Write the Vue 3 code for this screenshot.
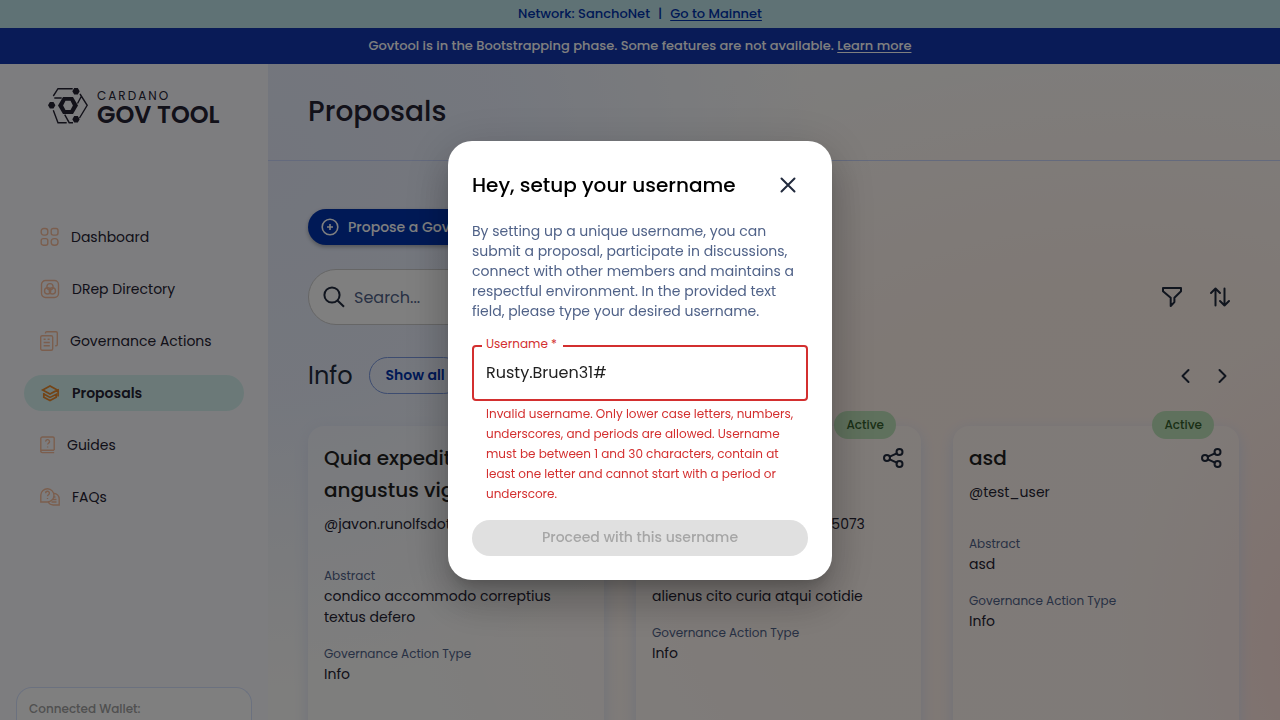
<script setup>
import { ref } from 'vue'

const username = ref('Rusty.Bruen31#')

const nav = [
  { label: 'Dashboard', icon: 'dashboard', width: 19 },
  { label: 'DRep Directory', icon: 'drep', width: 20 },
  { label: 'Governance Actions', icon: 'actions', width: 18 },
  { label: 'Proposals', icon: 'proposals', width: 20, active: true },
  { label: 'Guides', icon: 'guides', width: 15 },
  { label: 'FAQs', icon: 'faqs', width: 20 },
]

const cards = [
  { title: 'Quia expedita angustus vigor', user: '@javon.runolfsdottir', abstract: 'condico accommodo correptius textus defero', type: 'Info' },
  { title: 'Alienus cito curia atqui', user: '@cotidie_curia.atqui.citol5073', abstract: 'alienus cito curia atqui cotidie', type: 'Info' },
  { title: 'asd', user: '@test_user', abstract: 'asd', type: 'Info' },
]
</script>

<template>
  <div class="page">
    <div class="network">
      <span>Network: SanchoNet</span><span>|</span><a href="#">Go to Mainnet</a>
    </div>
    <div class="phase">Govtool is in the Bootstrapping phase. Some features are not available. <a href="#">Learn more</a></div>

    <div class="body">
      <aside class="sidebar">
        <div class="logo">
          <svg width="40" height="36" viewBox="0 0 40 36" fill="none" stroke="currentColor">
            <path d="M5.3 8 10 .7h14.7M5.3 22.3 10 34.8h8.7M32 6l7.2 11.3L31.5 30M6.3 10h7.4M33.5 8l-4 7.5M16.7 26.7l4.5 8H25" stroke-width="1.4" />
            <path fill="currentColor" stroke="none" fill-rule="evenodd" d="M15 9h10l5 8.4-5 8.6H15l-5-8.6zM17.5 12.8l-2.4 4.6 2.4 4.6h5l2.4-4.6-2.4-4.6z" />
            <path fill="currentColor" stroke="none" d="M26.2 0h3.6l1.9 3.3-1.9 3.3h-3.6l-1.9-3.3zM1.9 14h3.6l1.9 3.3-1.9 3.3H1.9L0 17.3zM26.2 28h3.6l1.9 3.3-1.9 3.3h-3.6l-1.9-3.3z" />
          </svg>
          <div class="logo-text"><span>CARDANO</span><strong>GOV TOOL</strong></div>
        </div>

        <nav>
          <a v-for="n in nav" :key="n.label" href="#" :class="{ active: n.active }">
            <svg v-if="n.icon === 'dashboard'" :width="n.width" height="20" viewBox="0 0 19 20">
              <rect x="1.2" y="1.5" width="6.6" height="6.6" rx="2.6" /><rect x="11.2" y="1.5" width="6.8" height="6.6" rx="2" />
              <rect x="1.2" y="11.6" width="6.6" height="6.6" rx="2" /><rect x="11.2" y="11.6" width="6.8" height="6.6" rx="3" />
            </svg>
            <svg v-else-if="n.icon === 'drep'" :width="n.width" height="20" viewBox="0 0 20 20">
              <rect x="1.5" y="1.5" width="17" height="17" rx="4" /><circle cx="10" cy="7.7" r="3.1" /><circle cx="7.6" cy="11.9" r="3.1" /><circle cx="12.4" cy="11.9" r="3.1" />
            </svg>
            <svg v-else-if="n.icon === 'actions'" :width="n.width" height="20" viewBox="0 0 18 20">
              <rect x=".7" y="4.7" width="12" height="14.6" rx="1.5" /><path d="M5.5 2.6V2A1.3 1.3 0 0 1 6.8.7H16A1.3 1.3 0 0 1 17.3 2v11.5a1.3 1.3 0 0 1-1.3 1.3h-.8M3.6 8.2h2M7.6 8.2h2M3.6 11.5h6.2M3.6 14.8h6.2" />
            </svg>
            <svg v-else-if="n.icon === 'proposals'" :width="n.width" height="20" viewBox="0 0 20 20" class="strong">
              <path d="M2.7 7 10 3l7.3 4-7.3 4zM11.500 10.200 18.100 7v6.500M3.800 10v4.300L10 17.600l6.200-3.300V11.300L10 14.400 3.800 10.900" />
            </svg>
            <svg v-else-if="n.icon === 'guides'" :width="n.width" height="20" viewBox="0 0 15 20">
              <path d="M14.2 15V3.3A1.3 1.3 0 0 0 12.9 2H2.4A1.6 1.6 0 0 0 .8 3.6v12.2a1.5 1.5 0 0 0 1.5 1.8h11.9M.8 15.2h13.4M5.7 6.6a1.9 1.9 0 1 1 2.8 1.6c-.7.5-.9.8-.9 1.4M7.6 11.5v.9" />
            </svg>
            <svg v-else :width="n.width" height="20" viewBox="0 0 20 20">
              <path d="M.8 15V8a6.6 6.6 0 1 1 6.6 7zM13.8 6.2A6 6 0 0 1 19.2 12v6h-6a6 6 0 0 1-5-3M5.6 6.2a1.9 1.9 0 1 1 2.8 1.6c-.7.5-.9.8-.9 1.4M7.5 11v.9M13.5 10h2M12.5 12.5h4M11.5 15h5" />
            </svg>
            <span>{{ n.label }}</span>
          </a>
        </nav>

        <div class="wallet">Connected Wallet:</div>
      </aside>

      <main>
        <header><h1>Proposals</h1></header>
        <div class="content">
          <button class="propose">
            <svg width="20" height="20" viewBox="0 0 20 20" fill="none" stroke="currentColor" stroke-width="1.6"><circle cx="10" cy="10" r="7.8" /><path d="M10 7v6M7 10h6" /></svg>
            Propose a Governance Action
          </button>

          <div class="tools">
            <label class="search">
              <svg width="24" height="24" viewBox="0 0 24 24" fill="none" stroke="currentColor" stroke-width="2"><circle cx="10" cy="10" r="7.6" /><path d="m15.5 15.5 6.5 6.3" /></svg>
              <input type="text" placeholder="Search..." aria-label="Search" />
            </label>
            <div class="tool-icons">
              <button class="icon" aria-label="Filter">
                <svg width="24" height="24" viewBox="0 0 24 24"><path d="M3 3h18v3.2l-6.6 6.5v4.4L10.7 21v-8.3L3 6.2z" /></svg>
              </button>
              <button class="icon" aria-label="Sort">
                <svg width="24" height="24" viewBox="0 0 24 24"><path d="M7.5 20.500V3.5M3 8l4.500-4.500L12 8M16.500 3.500v17M12 16l4.500 4.500L21 16" /></svg>
              </button>
            </div>
          </div>

          <div class="section-head">
            <h2>Info</h2>
            <button class="show">Show all</button>
            <div class="arrows">
              <button class="icon" aria-label="Previous"><svg width="24" height="24" viewBox="0 0 24 24"><path d="m14.500 6-6 6 6 6" /></svg></button>
              <button class="icon" aria-label="Next"><svg width="24" height="24" viewBox="0 0 24 24"><path d="m9.500 6 6 6-6 6" /></svg></button>
            </div>
          </div>

          <div class="cards">
            <article v-for="c in cards" :key="c.title">
              <span class="chip">Active</span>
              <div class="card-head">
                <h3>{{ c.title }}</h3>
                <button class="icon" aria-label="Share">
                  <svg width="24" height="24" viewBox="0 0 24 24"><circle cx="6" cy="12" r="3" /><circle cx="18.500" cy="6" r="3" /><circle cx="18.500" cy="18" r="3" /><path d="m8.800 10.700 7-3.400M8.800 13.300l7 3.400" /></svg>
                </button>
              </div>
              <p class="user">{{ c.user }}</p>
              <dl>
                <div><dt>Abstract</dt><dd>{{ c.abstract }}</dd></div>
                <div><dt>Governance Action Type</dt><dd>{{ c.type }}</dd></div>
              </dl>
            </article>
          </div>
        </div>
      </main>
    </div>

    <div class="backdrop">
      <form class="dialog" role="dialog" aria-labelledby="dialog-title" @submit.prevent>
        <div class="dialog-head">
          <h2 id="dialog-title">Hey, setup your username</h2>
          <button type="button" class="close" aria-label="Close">
            <svg width="24" height="24" viewBox="0 0 24 24"><path d="m5.5 5.5 13 13M18.5 5.5l-13 13" /></svg>
          </button>
        </div>
        <p class="desc">By setting up a unique username, you can submit a proposal, participate in discussions, connect with other members and maintains a respectful environment. In the provided text field, please type your desired username.</p>
        <div class="field">
          <label for="username">Username *</label>
          <input id="username" v-model="username" type="text" aria-describedby="username-help" />
        </div>
        <p id="username-help" class="help">Invalid username. Only lower case letters, numbers, underscores, and periods are allowed. Username must be between 1 and 30 characters, contain at least one letter and cannot start with a period or underscore.</p>
        <button class="submit" disabled>Proceed with this username</button>
      </form>
    </div>
  </div>
</template>

<style>
body { margin: 0; }
</style>

<style scoped>
* { box-sizing: border-box; }
.page {
  height: 100vh;
  overflow: hidden;
  display: flex;
  flex-direction: column;
  font-family: Poppins, Inter, "Open Sans", sans-serif;
  font-size: 14px;
  color: #212a3d;
}
h1, h2, h3, p, dl, dd { margin: 0; font-weight: 400; }
button, input { font: inherit; color: inherit; border: 0; background: none; padding: 0; }
.network {
  flex: 0 0 28px;
  display: flex;
  align-items: center;
  justify-content: center;
  gap: 8px;
  font-size: 13px;
  font-weight: 500;
  color: #0033ad;
  background: #bfe4ea;
}
.network a, .phase a { color: inherit; text-underline-offset: 2px; text-decoration-thickness: 1px; }
.phase {
  flex: 0 0 36px;
  line-height: 36px;
  text-align: center;
  font-size: 13px;
  font-weight: 500;
  color: #fff;
  background: #1236ae;
}
.body { flex: 1; min-height: 0; display: flex; }
.sidebar {
  flex: 0 0 268px;
  display: flex;
  flex-direction: column;
  background: #fbfbff;
}
.logo { display: flex; gap: 9px; padding: 24px 0 0 48px; color: #242232; }
.logo-text { display: flex; flex-direction: column; }
.logo-text span { font-size: 12px; line-height: 15px; letter-spacing: 2px; }
.logo-text strong { font-size: 24px; line-height: 24px; font-weight: 600; white-space: nowrap; }
nav { display: flex; flex-direction: column; gap: 16px; padding: 92px 24px 0; }
nav a {
  display: flex;
  align-items: center;
  gap: 12px;
  height: 36px;
  padding: 0 16px;
  border-radius: 18px;
  color: #242232;
  text-decoration: none;
}
nav svg { fill: none; stroke: #f6bd9c; stroke-width: 1.4; }
nav svg.strong { stroke: #e8882c; stroke-width: 1.7; }
nav a.active { background: #d6f3f1; font-weight: 600; }
.wallet {
  flex: 1 0 90px;
  margin: 172px 16px 0;
  padding: 12px;
  border: 1px solid #d6e2ff;
  border-bottom: 0;
  border-radius: 16px 16px 0 0;
  background: #fff;
  color: #a0a0a0;
  font-size: 12px;
  font-weight: 500;
  line-height: 18px;
}
main {
  flex: 1;
  min-width: 0;
  background:
    radial-gradient(ellipse 55% 80% at 0% 15%, #e6ebfa 0%, rgba(232, 238, 252, .9) 45%, rgba(240, 244, 253, 0) 100%),
    radial-gradient(ellipse 20% 50% at 104% 90%, #ffe0da 0%, rgba(255, 226, 220, 0) 100%),
    radial-gradient(ellipse 75% 85% at 85% 75%, #fff1ea 0%, #fff2eb 50%, rgba(255, 244, 238, 0) 100%),
    #fdfcfa;
}
header { height: 97px; padding: 0 40px; border-bottom: 1px solid #c8d4fb; }
h1 { font-size: 28px; line-height: 96px; font-weight: 500; color: #242232; }
.content { padding: 48px 40px 0; }
.propose {
  display: flex;
  align-items: center;
  gap: 8px;
  height: 36px;
  padding: 0 24px 0 12px;
  border-radius: 18px;
  background: #0033ad;
  color: #fff;
  font-weight: 500;
  white-space: nowrap;
  box-shadow: 0 2px 4px rgba(0, 0, 0, .3);
}
.tools { display: flex; justify-content: space-between; align-items: center; margin-top: 24px; }
.search {
  display: flex;
  align-items: center;
  gap: 8px;
  flex: 0 1 500px;
  height: 56px;
  padding: 0 13px;
  border: 1px solid #ccc;
  border-radius: 28px;
  background: #fff;
}
.search input { flex: 1; min-width: 0; outline: 0; font-size: 16px; }
.search input::placeholder { color: #506288; opacity: 1; }
.icon { display: flex; color: #212a3d; }
.icon svg { fill: none; stroke: currentColor; stroke-width: 2; stroke-linejoin: round; stroke-linecap: round; }
.tool-icons { display: flex; gap: 24px; padding-right: 8px; }
.section-head { display: flex; align-items: center; height: 37px; margin-top: 32px; }
h2 { font-size: 24px; }
.show { height: 37px; margin-left: 16px; padding: 0 16px; border: 1px solid #7a98e0; border-radius: 19px; color: #0033ad; font-weight: 600; white-space: nowrap; }
.arrows { margin-left: auto; display: flex; gap: 12px; padding-right: 6px; }
.cards { display: grid; grid-template-columns: 297fr 286fr 287fr; gap: 32px; margin-top: 32px; padding-right: 1px; }
article {
  position: relative;
  min-height: 340px;
  padding: 16px;
  border-radius: 16px;
  background: rgba(255, 255, 255, .3);
  box-shadow: 0 4px 15px #dde3f5;
}
.chip {
  position: absolute;
  top: -15px;
  right: 25px;
  padding: 0 12px;
  border-radius: 14px;
  background: #bfe3ba;
  color: #355f2d;
  font-size: 12px;
  font-weight: 500;
  line-height: 28px;
}
.card-head { display: flex; justify-content: space-between; align-items: flex-start; }
h3 { max-width: 200px; font-size: 20px; line-height: 32px; font-weight: 500; color: #212121; }
.card-head .icon { padding: 4px 0; }
.user { margin-top: 8px; line-height: 20px; color: #242232; }
dl { display: flex; flex-direction: column; gap: 16px; margin-top: 32px; }
dt { font-size: 12px; line-height: 20px; color: #506288; }
dd { line-height: 21px; color: #242232; }
.backdrop {
  position: fixed;
  inset: 0;
  display: flex;
  align-items: center;
  justify-content: center;
  background: rgba(0, 0, 0, .5);
}
.dialog {
  width: 384px;
  padding: 24px;
  border-radius: 24px;
  background: #fff;
  box-shadow: 0 11px 15px -7px rgba(0, 0, 0, .2), 0 24px 38px 3px rgba(0, 0, 0, .14), 0 9px 46px 8px rgba(0, 0, 0, .12);
}
.dialog-head { display: flex; align-items: center; justify-content: space-between; height: 40px; }
.dialog h2 { font-size: 20px; font-weight: 500; color: #000; white-space: nowrap; }
.close { display: flex; padding: 8px; }
.close svg { fill: none; stroke: #212a3d; stroke-width: 2; stroke-linecap: round; }
.desc { margin-top: 16px; line-height: 20px; color: #506288; }
.field { position: relative; margin-top: 24px; }
.field label {
  position: absolute;
  top: -10px;
  left: 10px;
  padding: 0 6px 0 4px;
  background: #fff;
  color: #d32f2f;
  font-size: 12px;
  line-height: 18px;
}
.field input {
  display: block;
  width: 100%;
  height: 56px;
  padding: 0 12px;
  border: 2px solid #d32f2f;
  border-radius: 4px;
  outline: 0;
  font-size: 16px;
  color: #212121;
}
.help { margin: 3px 0 0 14px; font-size: 12px; line-height: 20px; color: #d32f2f; }
.submit {
  display: block;
  width: 100%;
  height: 36px;
  margin-top: 16px;
  border-radius: 18px;
  background: #e0e0e0;
  color: #a6a6a6;
  font-weight: 500;
}
</style>
